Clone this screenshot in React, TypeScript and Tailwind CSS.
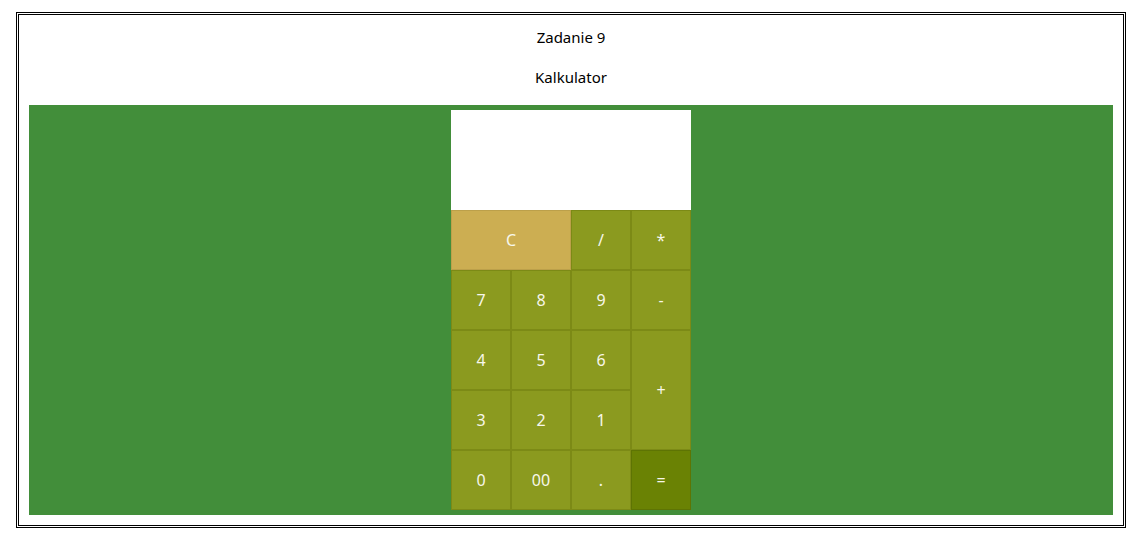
import React from 'react';

const btn = 'flex items-center justify-center border border-[#7c8a16] bg-[#8b9a1f] text-[16px] text-[#f7f7ea]';

export default function App() {
  return (
    <div className="p-[12px_21px_12px_16px] font-['Segoe_UI','Noto_Sans','Open_Sans',sans-serif]">
      <div className="w-[1110px] h-[516px] border-[3px] border-double border-black flex flex-col px-[10px] pt-[10px] pb-[10px]">
        <div className="flex flex-col items-center gap-[16px] mb-[16px] text-[15px] text-black">
          <p className="h-[24px] leading-[24px]">Zadanie 9</p>
          <p className="h-[24px] leading-[24px]">Kalkulator</p>
        </div>
        <div className="flex-1 bg-[#428e3a] flex justify-center py-[5px]">
          <div className="w-[240px] flex flex-col">
            <div className="h-[100px] bg-white"></div>
            <div className="grid grid-cols-4 auto-rows-[60px]">
              <button className="col-span-2 flex items-center justify-center border border-[#bca04a] bg-[#ccae52] text-[16px] text-[#f7f7ea]">C</button>
              <button className={btn}>/</button>
              <button className={btn}>*</button>
              <button className={btn}>7</button>
              <button className={btn}>8</button>
              <button className={btn}>9</button>
              <button className={btn}>-</button>
              <button className={btn}>4</button>
              <button className={btn}>5</button>
              <button className={btn}>6</button>
              <button className={`${btn} row-span-2`}>+</button>
              <button className={btn}>3</button>
              <button className={btn}>2</button>
              <button className={btn}>1</button>
              <button className={btn}>0</button>
              <button className={btn}>00</button>
              <button className={btn}>.</button>
              <button className="flex items-center justify-center border border-[#5e7404] bg-[#6a8204] text-[16px] text-[#f7f7ea]">=</button>
            </div>
          </div>
        </div>
      </div>
    </div>
  );
}
